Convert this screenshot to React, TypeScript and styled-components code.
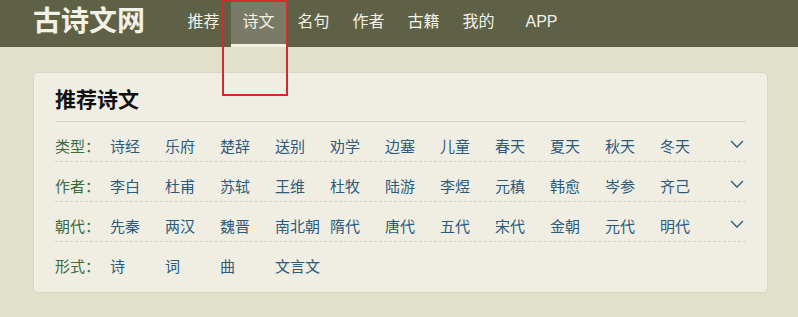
import React from "react";
import styled, { createGlobalStyle } from "styled-components";

const GlobalStyle = createGlobalStyle`
  body {
    margin: 0;
    background: #e1e0ca;
    font-family: "Liberation Sans", "Noto Sans CJK SC", sans-serif;
  }
`;

const Page = styled.div`
  position: relative;
`;

const Header = styled.header`
  height: 47px;
  background: #5e6146;
  display: flex;
  align-items: stretch;
  padding-left: 33px;
`;

const Logo = styled.h1`
  margin: 0 31px 0 0;
  font-size: 28px;
  font-weight: bold;
  color: #f2f1e6;
  line-height: 44px;
`;

const Nav = styled.nav`
  display: flex;
`;

const NavItem = styled.a<{ $active?: boolean; $gap?: number }>`
  display: block;
  box-sizing: border-box;
  width: 55px;
  height: 47px;
  margin-left: ${(p) => p.$gap || 0}px;
  text-align: center;
  font-size: 16px;
  line-height: 44px;
  color: #f2f1e6;
  text-decoration: none;
  background: ${(p) => (p.$active ? "#797b67" : "transparent")};
  border-bottom: 3px solid ${(p) => (p.$active ? "#f2f1e6" : "transparent")};
`;

/* red annotation frame drawn over the active tab */
const Highlight = styled.div`
  position: absolute;
  left: 222px;
  top: 0;
  width: 66px;
  height: 96px;
  box-sizing: border-box;
  border: 2px solid #d7282c;
  pointer-events: none;
`;

const Main = styled.main`
  padding: 25px 30px 0 33px;
`;

const Card = styled.section`
  background: #f0eee3;
  border: 1px solid #d9d7c2;
  border-radius: 5px;
  padding: 13px 21px 10px;
`;

const Title = styled.h2`
  margin: 0;
  font-size: 21px;
  font-weight: bold;
  color: #111;
  line-height: 28px;
  padding-bottom: 7px;
  border-bottom: 1px solid #d8d5c3;
`;

const Row = styled.div<{ $last?: boolean }>`
  display: flex;
  align-items: center;
  height: 40px;
  box-sizing: border-box;
  padding-top: 8px;
  border-bottom: 1px dashed ${(p) => (p.$last ? "transparent" : "#d6d3c1")};
  font-size: 15px;
`;

const Label = styled.span`
  min-width: 45px;
  margin-right: 10px;
  color: #3b6b3e;
`;

const Item = styled.a`
  min-width: 45px;
  margin-right: 10px;
  color: #2d5a7b;
  text-decoration: none;
`;

const More = styled.span`
  margin-left: auto;
  margin-right: 2px;
  margin-top: -3px;
  display: flex;
`;

const Chevron = () => (
  <svg width="14" height="8" viewBox="0 0 14 8">
    <polyline points="1,1 7,7 13,1" fill="none" stroke="#2d5a7b" strokeWidth="1.4" />
  </svg>
);

const rows: { label: string; items: string[]; more: boolean }[] = [
  {
    label: "类型：",
    items: ["诗经", "乐府", "楚辞", "送别", "劝学", "边塞", "儿童", "春天", "夏天", "秋天", "冬天"],
    more: true,
  },
  {
    label: "作者：",
    items: ["李白", "杜甫", "苏轼", "王维", "杜牧", "陆游", "李煜", "元稹", "韩愈", "岑参", "齐己"],
    more: true,
  },
  {
    label: "朝代：",
    items: ["先秦", "两汉", "魏晋", "南北朝", "隋代", "唐代", "五代", "宋代", "金朝", "元代", "明代"],
    more: true,
  },
  { label: "形式：", items: ["诗", "词", "曲", "文言文"], more: false },
];

const navs = ["推荐", "诗文", "名句", "作者", "古籍", "我的"];

export default function App() {
  return (
    <Page>
      <GlobalStyle />
      <Header>
        <Logo>古诗文网</Logo>
        <Nav>
          {navs.map((n) => (
            <NavItem key={n} href="#" $active={n === "诗文"}>
              {n}
            </NavItem>
          ))}
          <NavItem href="#" $gap={8}>
            APP
          </NavItem>
        </Nav>
      </Header>
      <Main>
        <Card>
          <Title>推荐诗文</Title>
          {rows.map((r, i) => (
            <Row key={r.label} $last={i === rows.length - 1}>
              <Label>{r.label}</Label>
              {r.items.map((it) => (
                <Item key={it} href="#">
                  {it}
                </Item>
              ))}
              {r.more && (
                <More>
                  <Chevron />
                </More>
              )}
            </Row>
          ))}
        </Card>
      </Main>
      <Highlight />
    </Page>
  );
}
